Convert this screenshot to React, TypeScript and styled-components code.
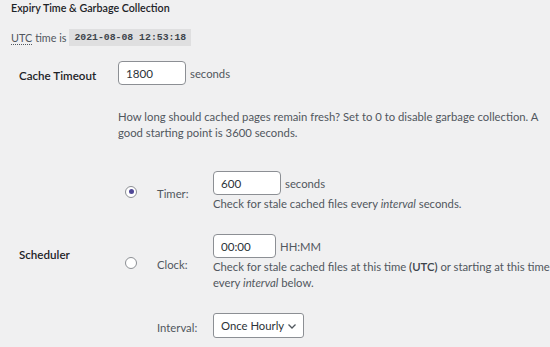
import styled, { createGlobalStyle } from "styled-components"

const GlobalStyle = createGlobalStyle`
  html, body {
    margin: 0;
    background: #f0f0f1;
  }
  body {
    font-family: "Segoe UI", Lato, "Open Sans", sans-serif;
    font-size: 11.3px;
    color: #3c434a;
  }
`

export default function App() {
  return (
    <>
      <GlobalStyle />
      <Page>
        <Heading>Expiry Time &amp; Garbage Collection</Heading>
        <UtcLine>
          <Abbr>UTC</Abbr> time is <Code>2021-08-08 12:53:18</Code>
        </UtcLine>

        <FormTable>
          <RowLabel $align="start">Cache Timeout</RowLabel>
          <Cell>
            <InputLine>
              <TextInput $width={68} defaultValue="1800" />
              <Unit>seconds</Unit>
            </InputLine>
            <Description $top={24}>
              How long should cached pages remain fresh? Set to 0 to disable garbage collection. A
              good starting point is 3600 seconds.
            </Description>
          </Cell>

          <RowLabel $align="center">Scheduler</RowLabel>
          <SchedulerGrid>
            <Radio $checked />
            <OptionLabel>Timer:</OptionLabel>
            <Cell>
              <InputLine>
                <TextInput $width={68} defaultValue="600" />
                <Unit>seconds</Unit>
              </InputLine>
              <Description $top={1}>
                Check for stale cached files every <em>interval</em> seconds.
              </Description>
            </Cell>

            <Radio />
            <OptionLabel>Clock:</OptionLabel>
            <Cell>
              <InputLine>
                <TextInput $width={63} defaultValue="00:00" />
                <Unit>HH:MM</Unit>
              </InputLine>
              <Description $top={1}>
                Check for stale cached files at this time <strong>(UTC)</strong> or starting at this time
                every <em>interval</em> below.
              </Description>
            </Cell>

            <span />
            <OptionLabel>Interval:</OptionLabel>
            <Cell>
              <Select>
                Once Hourly
                <svg width="10" height="10" viewBox="0 0 10 10">
                  <path d="M1.5 3.5 L5 7 L8.5 3.5" fill="none" stroke="#50575e" strokeWidth="1.3" />
                </svg>
              </Select>
            </Cell>
          </SchedulerGrid>
        </FormTable>
      </Page>
    </>
  )
}

const Page = styled.div`
  padding: 1px 0 0 11px;
`

const Heading = styled.h4`
  margin: 0;
  font-size: 10.7px;
  font-weight: 600;
  color: #1d2327;
  line-height: 14px;
`

const UtcLine = styled.p`
  margin: 14px 0 0;
  font-size: 10.8px;
  line-height: 17px;
  display: flex;
  align-items: center;
  gap: 3px;
  color: #50575e;
`

const Abbr = styled.span`
  border-bottom: 1px dotted #50575e;
  line-height: 13px;
`

const Code = styled.code`
  display: inline-block;
  padding: 0 5px;
  background: rgba(0, 0, 0, 0.07);
  color: #3c434a;
  font-family: "Liberation Mono", "DejaVu Sans Mono", monospace;
  font-size: 9.8px;
  font-weight: 600;
  line-height: 17px;
`

const FormTable = styled.div`
  display: grid;
  grid-template-columns: 99px 1fr;
  row-gap: 30px;
  margin-top: 15px;
  padding-left: 8px;
`

const RowLabel = styled.div<{ $align: "start" | "center" }>`
  align-self: ${(p) => p.$align};
  margin-top: ${(p) => (p.$align === "start" ? "6px" : "0")};
  font-size: 11.6px;
  font-weight: 600;
  color: #1d2327;
  line-height: 17px;
`

const Cell = styled.div`
  display: flex;
  flex-direction: column;
  align-items: flex-start;
`

const InputLine = styled.div`
  display: flex;
  align-items: center;
  gap: 4px;
`

const TextInput = styled.input<{ $width: number }>`
  box-sizing: border-box;
  width: ${(p) => p.$width}px;
  height: 24px;
  padding: 0 7px;
  border: 1px solid #8c8f94;
  border-radius: 4px;
  background: #fff;
  color: #2c3338;
  font: inherit;
  font-size: 11.6px;
  outline: none;
`

const Unit = styled.span`
  color: #50575e;
  line-height: 17px;
`

const Description = styled.p<{ $top: number }>`
  margin: ${(p) => p.$top}px 0 0;
  line-height: 16px;
  color: #50575e;

  strong {
    font-weight: 600;
    color: #3c434a;
  }
`

const SchedulerGrid = styled.div`
  display: grid;
  grid-template-columns: 40px 56px 1fr;
  row-gap: 22px;
  align-items: center;
  margin-left: -1px;
`

const Radio = styled.span<{ $checked?: boolean }>`
  justify-self: start;
  margin-left: 8px;
  box-sizing: border-box;
  width: 12px;
  height: 12px;
  border: 1px solid #8c8f94;
  border-radius: 50%;
  background: #fff;
  display: flex;
  align-items: center;
  justify-content: center;

  &::after {
    content: "";
    display: ${(p) => (p.$checked ? "block" : "none")};
    width: 5px;
    height: 5px;
    border-radius: 50%;
    background: #4f4796;
  }
`

const OptionLabel = styled.span`
  color: #50575e;
  line-height: 17px;
  padding-top: 3px;
`

const Select = styled.div`
  box-sizing: border-box;
  width: 91px;
  height: 25px;
  padding: 0 6px 0 7px;
  border: 1px solid #8c8f94;
  border-radius: 3px;
  background: #fff;
  color: #2c3338;
  display: flex;
  align-items: center;
  justify-content: space-between;
`
